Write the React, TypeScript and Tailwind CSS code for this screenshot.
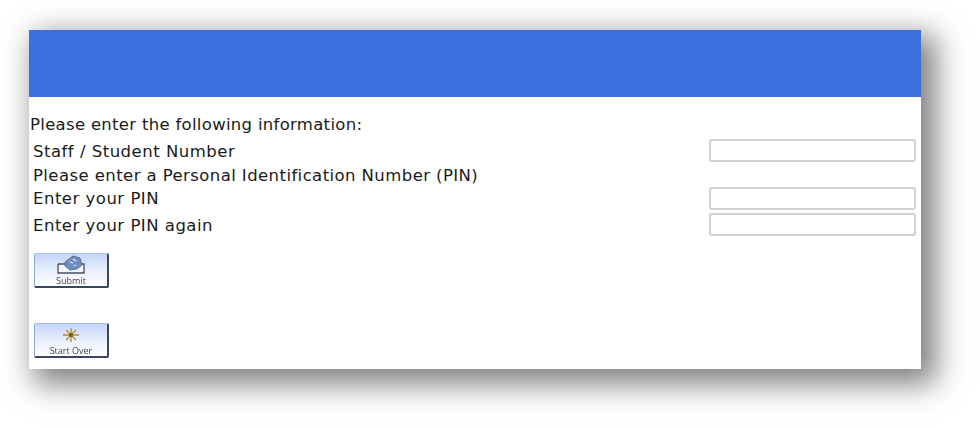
const Field = ({ label, low }: { label: string; low?: boolean }) => (
    <div className="flex h-[26px] items-center justify-between pl-[4px] pr-[5px]">
        <span className={low ? 'pt-[2px] tracking-[0.5px]' : 'tracking-[0.5px]'}>{label}</span>
        <input className="mb-[2px] h-[23px] w-[207px] rounded-[3px] border-2 border-[#d0d0d0] bg-white" />
    </div>
);

const ToolButton = ({ label, children }: { label: string; children: React.ReactNode }) => (
    <button className="flex h-[35px] w-[75px] flex-col items-center rounded-[2px] border-b-2 border-l border-r-2 border-t border-b-[#3a4560] border-l-[#8fa6d8] border-r-[#3a4560] border-t-[#a9bce6] bg-gradient-to-b from-[#c4d5fb] via-[#e8effd] to-white blur-[0.4px]">
        <span className="flex h-[21px] items-center">{children}</span>
        <span className="text-[9px] leading-[11px] text-[#444] [font-family:'Open_Sans',sans-serif]">{label}</span>
    </button>
);

const App = () => {
    return (
        <div className="h-[428px] w-[980px] overflow-hidden bg-white pl-[29px] pt-[30px] text-[16.5px] text-[#1a1a1a] [font-family:'DejaVu_Sans',sans-serif]">
            <div className="h-[339px] w-[892px] bg-white shadow-[10px_10px_28px_5px_rgba(0,0,0,0.5)]">
                <div className="h-[67px] bg-[#3b6fe0]" />
                <p className="mt-[18px] h-[20px] pl-[1px] leading-[20px] tracking-[0.3px]">Please enter the following information:</p>
                <div className="mt-[3px]">
                    <Field label="Staff / Student Number" low />
                    <p className="h-[22px] pl-[4px] leading-[24px] tracking-[0.42px]">Please enter a Personal Identification Number (PIN)</p>
                    <Field label="Enter your PIN" />
                    <Field label="Enter your PIN again" low />
                </div>
                <div className="ml-[5px] mt-[15px] flex flex-col gap-[35px]">
                    <ToolButton label="Submit">
                        <svg width="30" height="21" viewBox="0 0 30 21">
                            <path d="M2 10h9M24 10h4v9H2V10" fill="#f4f6fb" stroke="#46505f" strokeWidth="1.3" />
                            <path d="M9 8l8-6 7 2 2 7-5 4-7 1-5-4z" fill="#6f8fc4" stroke="#4a5f86" strokeWidth="0.8" />
                            <path d="M14 8l3 1M17 5l3 2M18 11l2 1" stroke="#dfe8f7" strokeWidth="1.2" />
                        </svg>
                    </ToolButton>
                    <ToolButton label="Start Over">
                        <svg width="18" height="18" viewBox="0 0 18 18">
                            <path d="M9 2v14M1 9h16M4 4l10 10M14 4L4 14" stroke="#b08a2c" strokeWidth="1.3" />
                            <circle cx="9" cy="9" r="2" fill="#7a5a14" />
                        </svg>
                    </ToolButton>
                </div>
            </div>
        </div>
    );
};

export default App;
